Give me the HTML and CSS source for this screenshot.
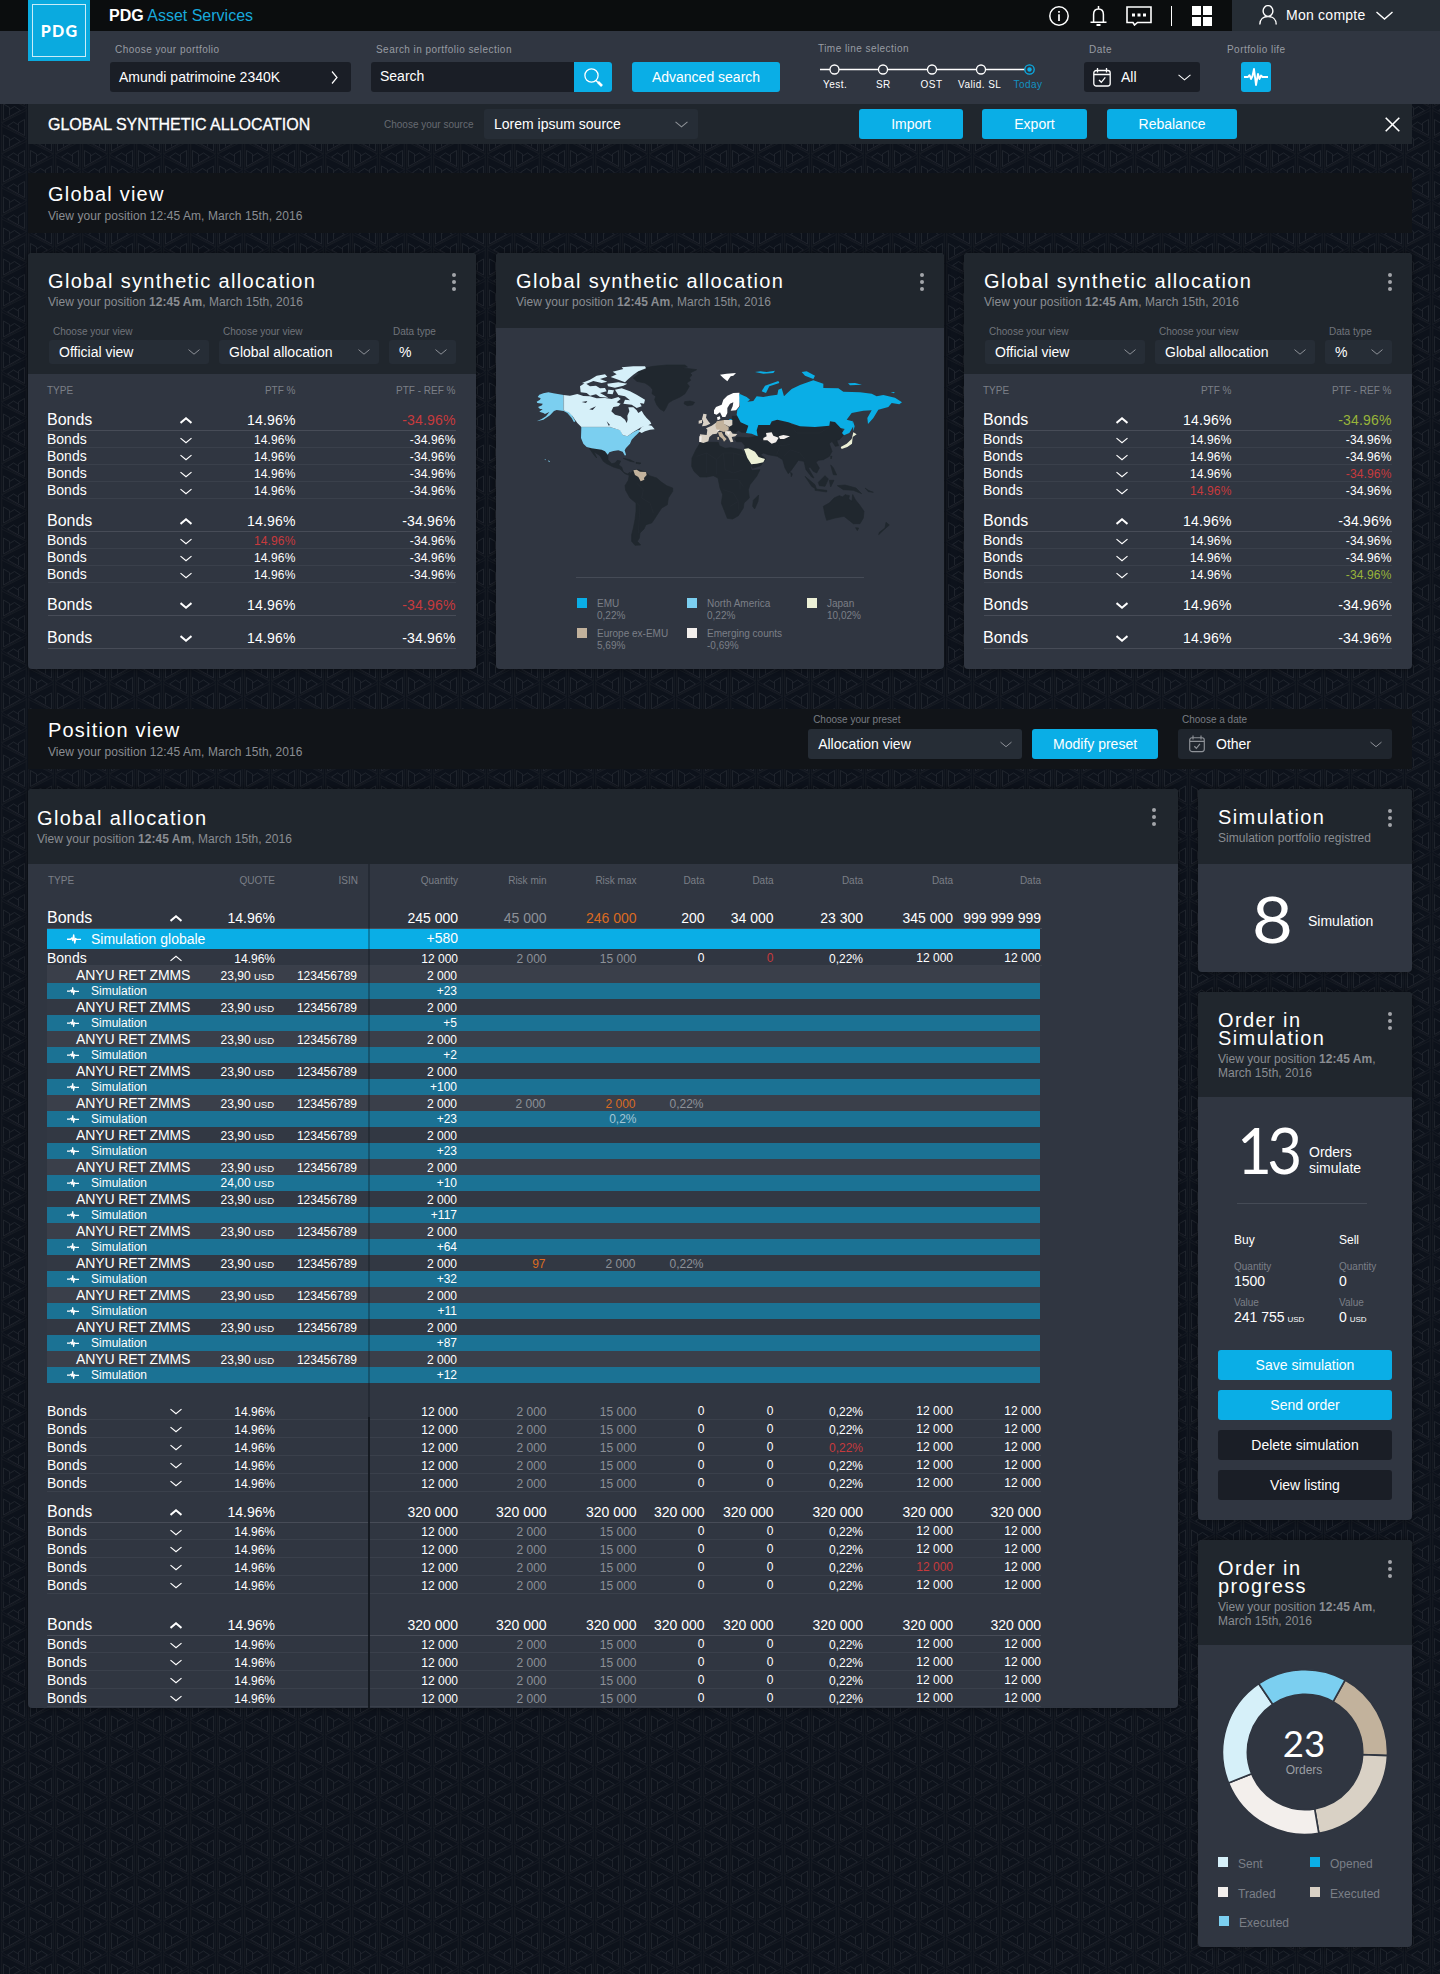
FILE: index.html
```html
<!DOCTYPE html>
<html lang="en">
<head>
<meta charset="utf-8">
<title>PDG Asset Services</title>
<link rel="stylesheet" href="styles.css">
</head>
<body>
<svg class="sprite" width="0" height="0" aria-hidden="true">
  <symbol id="chev" viewBox="0 0 12 6"><path d="M.5.6 6 5.2 11.500 .6" fill="none" stroke="currentColor"/></symbol>
  <symbol id="chev-up" viewBox="0 0 12 6"><path d="M.5 5.400 6 .8l5.500 4.600" fill="none" stroke="currentColor"/></symbol>
  <symbol id="kebab" viewBox="0 0 4 18"><g fill="currentColor"><circle cx="2" cy="2" r="2"/><circle cx="2" cy="9" r="2"/><circle cx="2" cy="16" r="2"/></g></symbol>
  <symbol id="pulse" viewBox="0 0 24 18"><path d="M0 9h4l1.500-1.800L7 11l1.500-3L10 1l2 16 2-11 1.500 5L17 7.500 18.500 9H24" fill="none" stroke="currentColor" stroke-width="1.900" stroke-linejoin="round"/></symbol>
  <symbol id="beat" viewBox="0 0 14 10"><path d="M0 5.200h3.500L4.800 4 5.700 6.500 6.700 1 7.700 9l1-4.500 1 .9H14" fill="none" stroke="currentColor" stroke-width="1.400" stroke-linejoin="round"/></symbol>
  <symbol id="cal" viewBox="0 0 18 19"><g fill="none" stroke="currentColor" stroke-width="1.300"><rect x=".8" y="2.500" width="16.400" height="15.500" rx="2.500"/><path d="M1 6.500h16M4.500 0v4.500M13.500 0v4.500M6 12l2.300 2.300 4-5"/></g></symbol>
</svg>

<header>
  <div class="topbar">
    <div class="brand"><b>PDG</b> Asset Services</div>
    <nav class="tools">
      <svg class="t-info" width="20" height="20" viewBox="0 0 20 20"><circle cx="10" cy="10" r="9.200" fill="none" stroke="#fff" stroke-width="1.500"/><path d="M10 8.200V15M10 5v1.800" stroke="#fff" stroke-width="1.700"/></svg>
      <svg class="t-bell" width="17" height="20" viewBox="0 0 17 20"><path d="M8.500 0v3M.5 16.200h16M3.600 16V8.500C3.600 5 5.500 3 8.500 3s4.900 2 4.900 5.500V16" fill="none" stroke="#fff" stroke-width="1.500"/><path d="M6.500 18h4v2h-4z" fill="#fff"/></svg>
      <svg class="t-chat" width="26" height="20" viewBox="0 0 26 20"><path d="M1 1h24v15.500H11.500L8.500 19l-1.500-2.500H1z" fill="none" stroke="#fff" stroke-width="1.600"/><path d="M6 7.500h3v3H6zM11.500 7.500h3v3h-3zM17 7.500h3v3h-3z" fill="#fff"/></svg>
      <i class="sep"></i>
      <svg class="t-grid" width="20" height="20" viewBox="0 0 20 20"><path d="M0 0h9v9H0zM11 0h9v9h-9zM0 11h9v9H0zM11 11h9v9h-9z" fill="#fff"/></svg>
    </nav>
    <div class="account">
      <svg width="18" height="20" viewBox="0 0 18 20"><path d="M.8 19.500C.8 14 4.500 11.500 9 11.500s8.200 2.500 8.200 8" fill="none" stroke="#fff" stroke-width="1.400"/><ellipse cx="9" cy="6" rx="4.900" ry="5.400" fill="#262d35" stroke="#fff" stroke-width="1.400"/></svg>
      <span>Mon compte</span>
      <svg width="17" height="9" viewBox="0 0 17 9"><path d="M.5 1l8 7 8-7" fill="none" stroke="#fff" stroke-width="1.400"/></svg>
    </div>
    <div class="logo"><span>PDG</span></div>
  </div>
  <div class="filters">
    <div class="field f-portfolio"><label>Choose your portfolio</label>
      <div class="box">Amundi patrimoine 2340K<svg width="7" height="13" viewBox="0 0 7 13"><path d="M1 .5l5 6-5 6" fill="none" stroke="#fff" stroke-width="1.200"/></svg></div></div>
    <div class="field f-search"><label>Search in portfolio selection</label>
      <div class="search"><span>Search</span><button><svg width="19" height="19" viewBox="0 0 19 19"><circle cx="7.500" cy="7.500" r="6.600" fill="none" stroke="#fff" stroke-width="1.300"/><path d="M12 12.500l2 2" stroke="#fff" stroke-width="1.400"/><path d="M14 14l4 4" stroke="#fff" stroke-width="2.600"/></svg></button></div></div>
    <button class="btn advanced">Advanced search</button>
    <div class="field f-time"><label>Time line selection</label>
      <svg width="216" height="12" viewBox="0 0 216 12"><path d="M0 6.500h206" stroke="#fff" stroke-width="1.300"/><g fill="#303641" stroke="#fff" stroke-width="1.300"><circle cx="14.500" cy="6.500" r="4.500"/><circle cx="63" cy="6.500" r="4.500"/><circle cx="112" cy="6.500" r="4.500"/><circle cx="161" cy="6.500" r="4.500"/><circle cx="209.500" cy="6.500" r="4.700" stroke="#0aaee6"/></g><circle cx="209.500" cy="6.500" r="2.200" fill="#0aaee6"/></svg>
      <div class="stops"><span>Yest.</span><span>SR</span><span>OST</span><span>Valid. SL</span><span class="on">Today</span></div></div>
    <div class="field f-date"><label>Date</label>
      <div class="box"><svg width="18" height="19"><use href="#cal"/></svg><span>All</span><svg class="c" width="13" height="7"><use href="#chev"/></svg></div></div>
    <div class="field f-life"><label>Portfolio life</label>
      <button class="life"><svg width="24" height="18"><use href="#pulse"/></svg></button></div>
  </div>
</header>

<main>
  <div class="titlebar">
    <h1>GLOBAL SYNTHETIC ALLOCATION</h1>
    <label>Choose your source</label>
    <div class="select s-source">Lorem ipsum source<svg width="13" height="7"><use href="#chev"/></svg></div>
    <button class="btn b-import">Import</button>
    <button class="btn b-export">Export</button>
    <button class="btn b-rebalance">Rebalance</button>
    <svg class="close" width="15" height="15" viewBox="0 0 15 15"><path d="M.7.7l13.600 13.600M14.300 .7L.7 14.300" stroke="#fff" stroke-width="1.600"/></svg>
  </div>

  <section class="section s-global">
    <div><h2>Global view</h2><p>View your position 12:45 Am, March 15th, 2016</p></div>
  </section>

  <div class="cards">
    <article class="card">
      <div class="head tall">
        <svg class="kebab" width="4" height="18"><use href="#kebab"/></svg>
        <h2>Global synthetic allocation</h2><p>View your position <b>12:45 Am</b>, March 15th, 2016</p>
        <div class="selects">
          <div><label>Choose your view</label><div class="select">Official view<svg width="12" height="6"><use href="#chev"/></svg></div></div>
          <div><label>Choose your view</label><div class="select">Global allocation<svg width="12" height="6"><use href="#chev"/></svg></div></div>
          <div><label>Data type</label><div class="select">%<svg width="12" height="6"><use href="#chev"/></svg></div></div>
        </div>
      </div>
      <div class="alloc" data-table="left"></div>
    </article>

    <article class="card">
      <div class="head mid">
        <svg class="kebab" width="4" height="18"><use href="#kebab"/></svg>
        <h2>Global synthetic allocation</h2><p>View your position <b>12:45 Am</b>, March 15th, 2016</p>
      </div>
      <svg class="map" width="368" height="185" viewBox="138 370 1104 555">
        <g fill="#20272e" stroke="#20272e" stroke-width="2" stroke-linejoin="round">
          <path d="M430 415 450 400 436 398 470 390 462 385 490 380 530 376 585 376 592 382 575 384 620 390 600 400 606 406 598 415 602 422 590 430 598 440 585 462 570 472 548 482 535 490 528 505 522 515 510 508 500 495 494 480 497 470 486 462 488 450 480 440 465 430 440 425Z"/>
          <path d="M584 486 600 484 614 488 608 496 592 498 582 492Z"/>
          <path d="M298 626 320 628 335 630 345 636 354 648 354 660 365 672 375 670 382 662 392 664 386 676 395 682 400 697 412 703 420 698 418 707 405 702 390 688 370 682 350 672 340 665 330 648 312 636 320 655 312 646Z"/>
          <path d="M430 692 445 690 468 698 478 708 500 715 515 728 530 738 548 745 548 755 535 775 532 795 515 805 505 820 492 840 485 850 468 855 462 868 450 880 448 895 442 905 452 916 435 917 425 905 425 885 430 865 435 840 438 815 438 790 420 775 407 752 405 738 415 722 418 705Z"/>
          <path d="M400 656 420 660 433 667 420 665ZM438 668 453 670 450 673 438 671Z"/>
          <path d="M727 530 742 530 750 547 775 557 768 578 755 578 745 572 735 580 722 572 718 562 727 556Z"/>
          <path d="M740 592 775 594 800 590 798 570 802 555 840 553 860 540 895 545 905 555 930 560 975 560 1000 556 1020 545 1040 550 1055 570 1062 585 1048 600 1040 602 1046 618 1036 620 1026 605 1018 612 1026 635 1018 650 1000 660 985 662 978 668 988 685 980 700 970 695 960 682 955 685 972 715 965 712 948 690 942 665 925 662 905 690 895 702 885 685 878 660 862 650 835 645 820 640 812 645 828 658 812 678 788 686 780 672 762 635 765 618 755 606 740 606 734 598Z"/>
          <path d="M630 610 655 608 685 608 688 618 705 626 722 624 755 630 765 645 778 670 785 692 810 690 800 710 780 735 775 750 778 775 762 790 760 805 745 828 728 838 712 836 702 810 694 790 698 765 690 745 684 715 670 708 650 712 630 712 612 695 605 680 606 655 618 630Z"/>
          <path d="M790 782 806 766 804 785 794 808 788 800ZM902 698l5 5-3 8Z"/>
          <path d="M1000 800 1018 790 1032 775 1048 768 1058 772 1065 765 1078 768 1076 778 1086 785 1088 765 1096 780 1108 795 1122 815 1120 835 1110 852 1090 852 1075 840 1062 830 1035 835 1010 842 1005 825ZM1097 864 1106 865 1102 873ZM1188 848 1198 856 1180 872 1166 885 1168 878 1185 865Z"/>
          <path d="M945 710 975 735 980 750 965 740ZM975 748 1010 752 1010 757 975 752ZM985 728 1005 708 1015 718 1005 740 988 738ZM1018 722 1032 722 1022 742ZM1042 738 1065 736 1098 745 1115 762 1090 752 1060 750ZM1022 676 1030 684 1040 706 1030 705ZM1022 650 1026 650 1023 658ZM1125 745 1135 752 1150 758 1135 756Z"/>
        </g>
        <path fill="none" stroke="#2b323b" stroke-width="1" d="M620 650 650 640 680 660 700 640 730 640V680M650 640V700M680 660V705M700 640 705 690 730 700 760 690M700 720H745L760 740M700 750 730 760 745 785 720 800M745 785V810M730 640 765 650M750 720V750M440 730 460 750 455 775 480 790 490 820M440 790 450 800 445 880M880 650 900 630 930 640 945 660M905 560 920 580 990 580 1020 560M810 600 850 620 900 615M860 645 870 620"/>
        <path fill="#7bcff0" d="M221 466 190 461 175 458 160 461 148 465 143 472 152 476 150 480 140 486 142 490 158 492 156 497 144 502 150 508 158 508 148 516 160 520 165 523 178 517 168 530 155 538 140 545 160 540 180 527 192 514 200 511 221 514 232 520 245 535 252 548 256 545 245 525 232 514 221 512Z"/>
        <path fill="#7bcff0" d="M274 562H360L372 566 392 572 398 586 412 590 430 578 445 570 450 575 443 582 435 590 425 600 420 612 408 625 404 632 408 645 405 648 398 636 385 632 370 634 358 638 353 645 345 635 335 630 320 628 305 626 290 622 280 612 273 595ZM163 657 168 660 166 662ZM174 662 180 665 177 668Z"/>
        <g fill="#d6f0f9">
          <path d="M221 466 240 468 262 463 280 469 300 470 320 476 345 475 365 478 385 472 392 478 380 488 392 492 385 500 370 502 364 515 375 525 392 530 405 540 410 550 413 540 412 528 418 515 415 503 430 503 440 512 445 520 455 513 462 525 470 535 480 545 484 552 468 560 455 562 445 568 430 577 412 590 398 586 390 572 372 566 360 562 274 562 262 550 255 540 248 530 236 518 221 512Z"/>
          <path d="M455 562 470 555 485 558 494 569 480 570 465 575 455 580 446 575Z"/>
          <path d="M270 440 285 430 300 440 318 438 330 446 345 445 350 455 330 460 345 468 355 474 330 472 318 464 300 468 290 460 272 458ZM276 430 300 420 320 408 345 404 352 411 330 418 352 426 335 430 310 424 290 432ZM352 432 385 428 412 432 400 438 375 444 354 440ZM355 450 372 452 368 464 352 462Z"/>
          <path d="M375 450 395 446 420 455 440 465 465 480 462 492 450 490 455 500 440 505 425 495 400 492 405 480 420 482 405 470 385 466Z"/>
          <path d="M368 396 400 388 395 383 430 380 465 380 468 386 445 395 430 405 415 418 405 428 385 420 362 412 380 404Z"/>
        </g>
        <path fill="#303641" d="M275 487 292 484 288 490ZM298 509 318 500 308 511ZM350 545 360 556 356 558Z"/>
        <path fill="none" stroke="#8fa9b5" stroke-width="1.500" d="M221 466V513M274 562H362"/>
        <path fill="#c2b29c" d="M430 692 440 690 450 696 468 697 470 706 462 715 463 720 452 725 445 712 435 706Z"/>
        <path fill="#fff" d="M690 405 710 402 738 400 730 408 722 410 712 425 700 415ZM672 512 678 502 695 495 700 480 712 468 730 460 748 459 750 475 748 500 738 512 722 513 728 500 730 488 720 492 712 505 712 520 706 532 697 532 690 518 680 525 672 522ZM681 533 690 530 691 538 683 542Z"/>
        <g fill="#d9d1c5">
          <path d="M640 522 650 524 648 534 655 545 661 552 648 558 636 560 640 548 636 538ZM626 543 636 540 636 550 626 552ZM630 584 650 586 652 570 648 566 665 558 680 548 690 568 680 582 668 584 658 592 655 605 640 610 628 606Z"/>
          <path d="M702 541 727 541 727 556 718 561 702 553ZM705 572 722 574 728 582 742 583 736 590 725 592 730 606 722 608 714 592 705 584Z"/>
        </g>
        <path fill="#c2b29c" d="M680 545 702 541 702 552 716 562 716 570 702 577 680 570 676 558ZM684 578 695 577 702 590 710 598 702 606 698 598 688 590ZM682 592h5v8h-5Z"/>
        <path fill="#f3efec" d="M628 590h7l-1 17h-6ZM678 570 690 570 686 575ZM708 576 720 578 716 586ZM820 595 830 590 828 580 845 578 850 588 866 594 858 608 845 612 832 602 820 602ZM866 590 880 586 900 590 882 598 870 598Z"/>
        <path fill="#0aaee6" d="M748 462 770 472 780 480 772 486 790 484 800 470 820 472 840 468 862 465 865 450 875 446 882 470 892 460 905 448 930 436 970 422 1000 432 1000 445 1045 446 1060 456 1110 458 1145 462 1160 470 1180 466 1215 474 1236 488 1228 494 1205 490 1195 502 1165 510 1150 535 1134 553 1132 535 1145 512 1120 513 1085 520 1070 540 1088 545 1090 560 1078 580 1062 587 1056 580 1064 568 1052 565 1035 547 1020 545 1018 558 975 562 930 560 895 548 862 540 845 545 840 556 805 556 800 572 803 590 785 582 768 580 775 558 752 548 740 525 742 510 750 500 748 480Z"/>
        <path fill="#0aaee6" d="M815 455 825 438 865 424 868 430 838 440 828 460ZM935 397 950 395 975 408 970 418 945 408ZM795 397 812 395 830 397 855 393 850 400 820 402ZM1074 431 1095 430 1116 435 1080 437ZM1088 542 1094 560 1090 575ZM1202 458 1214 457 1212 461ZM718 538h7v3h-7Z"/>
        <path fill="#ecf0d6" d="M762 628 775 626 795 636 806 652 825 658 820 668 800 672 784 674 772 655ZM1085 598 1090 578 1100 584 1088 592 1086 612 1072 622 1055 628 1052 622 1070 612Z"/>
      </svg>
      <div class="map-legend">
        <div><i class="c-emu"></i><span>EMU<br>0,22%</span></div>
        <div><i class="c-na"></i><span>North America<br>0,22%</span></div>
        <div><i class="c-jp"></i><span>Japan<br>10,02%</span></div>
        <div><i class="c-eu"></i><span>Europe ex-EMU<br>5,69%</span></div>
        <div><i class="c-em"></i><span>Emerging counts<br>-0,69%</span></div>
      </div>
    </article>

    <article class="card">
      <div class="head tall">
        <svg class="kebab" width="4" height="18"><use href="#kebab"/></svg>
        <h2>Global synthetic allocation</h2><p>View your position <b>12:45 Am</b>, March 15th, 2016</p>
        <div class="selects">
          <div><label>Choose your view</label><div class="select">Official view<svg width="12" height="6"><use href="#chev"/></svg></div></div>
          <div><label>Choose your view</label><div class="select">Global allocation<svg width="12" height="6"><use href="#chev"/></svg></div></div>
          <div><label>Data type</label><div class="select">%<svg width="12" height="6"><use href="#chev"/></svg></div></div>
        </div>
      </div>
      <div class="alloc" data-table="right"></div>
    </article>
  </div>

  <section class="section s-position">
    <div class="s-text"><h2>Position view</h2><p>View your position 12:45 Am, March 15th, 2016</p></div>
    <div class="preset"><label>Choose your preset</label><div class="select">Allocation view<svg width="12" height="7"><use href="#chev"/></svg></div></div>
    <button class="btn modify">Modify preset</button>
    <div class="other"><label>Choose a date</label><div class="select"><svg width="16" height="18"><use href="#cal"/></svg><span>Other</span><svg class="c" width="12" height="7"><use href="#chev"/></svg></div></div>
  </section>

  <div class="columns">
    <article class="card position">
      <div class="head pos-head">
        <svg class="kebab" width="4" height="18"><use href="#kebab"/></svg>
        <h2>Global allocation</h2><p>View your position <b>12:45 Am</b>, March 15th, 2016</p>
      </div>
      <div class="grid" id="positions"></div>
      <i class="rule-top"></i><i class="rule-bottom"></i>
    </article>

    <aside>
      <article class="card">
        <div class="head side">
          <svg class="kebab" width="4" height="18"><use href="#kebab"/></svg>
          <h2>Simulation</h2><p>Simulation portfolio registred</p>
        </div>
        <div class="count one"><strong>8</strong><span>Simulation</span></div>
      </article>

      <article class="card">
        <div class="head side two">
          <svg class="kebab" width="4" height="18"><use href="#kebab"/></svg>
          <h2>Order in<br>Simulation</h2><p>View your position <b>12:45 Am</b>,<br>March 15th, 2016</p>
        </div>
        <div class="count thirteen"><strong>13</strong><span>Orders<br>simulate</span></div>
        <div class="trade">
          <dl><dt class="side-name">Buy</dt><dt>Quantity</dt><dd>1500</dd><dt>Value</dt><dd>241 755 <small>USD</small></dd></dl>
          <dl><dt class="side-name">Sell</dt><dt>Quantity</dt><dd>0</dd><dt>Value</dt><dd>0 <small>USD</small></dd></dl>
        </div>
        <div class="actions">
          <button class="btn">Save simulation</button>
          <button class="btn">Send order</button>
          <button class="btn dark">Delete simulation</button>
          <button class="btn dark">View listing</button>
        </div>
      </article>

      <article class="card">
        <div class="head side two">
          <svg class="kebab" width="4" height="18"><use href="#kebab"/></svg>
          <h2>Order in<br>progress</h2><p>View your position <b>12:45 Am</b>,<br>March 15th, 2016</p>
        </div>
        <svg class="donut" width="168" height="168" viewBox="-252 -252 504 504">
          <g stroke="#303641" stroke-width="5">
            <path fill="#c2b29c" d="M120.500-216A247.500 247.500 0 0 1 247.300 11L173 8A173 173 0 0 0 84.500-151Z"/>
            <path fill="#d9d1c5" d="M247.300 11A247.500 247.500 0 0 1 41.500 244L29 170.500A173 173 0 0 0 173 8Z"/>
            <path fill="#f3efec" d="M41.500 244A247.500 247.500 0 0 1-229.300 93L-160 65A173 173 0 0 0 29 170.500Z"/>
            <path fill="#d6f0f9" d="M-229.300 93A247.500 247.500 0 0 1-138.500-205L-97-143A173 173 0 0 0-160 65Z"/>
            <path fill="#7bcff0" d="M-138.500-205A247.500 247.500 0 0 1 120.500-216L84.500-151A173 173 0 0 0-97-143Z"/>
          </g>
          <text class="d-num" x="-3" y="16" text-anchor="middle">23</text>
          <text class="d-lab" x="-3" y="66" text-anchor="middle">Orders</text>
        </svg>
        <div class="order-legend">
          <div><i class="c-sent"></i>Sent</div><div><i class="c-emu"></i>Opened</div>
          <div><i class="c-em"></i>Traded</div><div><i class="c-ex"></i>Executed</div>
          <div><i class="c-na"></i>Executed</div>
        </div>
      </article>
    </aside>
  </div>
</main>
<script src="script.js"></script>
</body>
</html>
```
FILE: styles.css
```css
* { box-sizing: border-box; margin: 0; padding: 0; }
body {
  width: 1440px;
  min-height: 1974px;
  font: 14px/17px "Liberation Sans", Arial, sans-serif;
  color: #fff;
  background: #0d121b url("data:image/svg+xml,%3Csvg xmlns='http://www.w3.org/2000/svg' xmlns:xlink='http://www.w3.org/1999/xlink' width='54' height='31'%3E%3Cdefs%3E%3Cg id='h' fill='none' stroke='%2321262e' stroke-width='.9'%3E%3Cpath d='M9 7.500V-.5L3-4V12L20 2.500 14-1.500 9 1.500'/%3E%3Cpath stroke='%23161b23' d='M1.200-15V15L26-.5 1.200-13'/%3E%3C/g%3E%3Cg id='p'%3E%3Cuse xlink:href='%23h'/%3E%3Cuse xlink:href='%23h' transform='scale(-1 1)'/%3E%3C/g%3E%3C/defs%3E%3Cuse xlink:href='%23p' x='27.500' y='15.500'/%3E%3Cuse xlink:href='%23p' x='.5' y='0'/%3E%3Cuse xlink:href='%23p' x='54.500' y='0'/%3E%3Cuse xlink:href='%23p' x='.5' y='31'/%3E%3Cuse xlink:href='%23p' x='54.500' y='31'/%3E%3C/svg%3E") 0 15px;
}
button { border: 0; font: inherit; color: inherit; }
svg { display: block; flex: none; }
.sprite { position: absolute; }
h1, h2 { font-weight: 400; }
h2 { font-size: 20px; line-height: 20px; letter-spacing: 1.33px; }
p { font-size: 12px; line-height: 14px; letter-spacing: .03px; color: #8a8d92; }
label { display: block; font-size: 10px; line-height: 12px; color: #787c83; white-space: nowrap; }
.btn { height: 30px; line-height: 30px; border-radius: 3px; background: #0aaee6; text-align: center; white-space: nowrap; }
.btn.dark { background: #1a1e26; }

/* header */
.topbar { position: relative; display: flex; height: 31px; background: #0b0d0e; }
.brand { width: 950px; padding: 6px 0 0 109px; font-size: 16px; line-height: 19px; color: #18a9dc; }
.brand b { color: #fff; }
.tools { display: flex; width: 282px; padding: 6px 0 0 99px; }
.t-bell { margin-left: 21px; }
.t-chat { margin-left: 19px; }
.sep { width: 1px; height: 20px; margin: 0 20px 0 19px; background: #fff; }
.account { display: flex; align-items: flex-start; flex: 1; padding: 5px 0 0 27px; background: #262d35; line-height: 20px; }
.account span { margin: 0 10px 0 9px; letter-spacing: .25px; white-space: nowrap; }
.account svg:last-child { margin-top: 6px; }
.logo { position: absolute; left: 28px; top: 0; width: 62px; height: 61px; padding: 4px; background: #0aaadf; z-index: 1; }
.logo span { display: block; height: 53px; border: 1px solid #c9ecf8; font: 900 16px/52px Lato, sans-serif; letter-spacing: 1.3px; text-align: center; padding-left: 1px; }
.filters { display: flex; height: 73px; padding: 13px 0 0 110px; background: #303641; }
.field label { margin: 0 0 6px 5px; letter-spacing: .45px; color: #989ca3; }
.box { display: flex; align-items: center; height: 30px; padding: 0 9px; border-radius: 3px; background: #1a1e26; }
.f-portfolio { width: 241px; margin-right: 20px; }
.f-portfolio .box { justify-content: space-between; padding-right: 13px; }
.f-search { width: 241px; margin-right: 20px; }
.search { display: flex; height: 30px; border-radius: 3px; background: #1a1e26; overflow: hidden; }
.search span { flex: 1; padding-left: 9px; line-height: 29px; }
.search button { display: flex; align-items: center; justify-content: center; width: 38px; background: #0aaee6; }
.advanced { width: 148px; margin: 18px 38px 0 0; }
.f-time { width: 232px; margin-left: 2px; }
.field.f-time label { margin: -1px 0 8px -2px; }
.stops { display: flex; margin: 4px 0 0 -9px; font-size: 10px; line-height: 12px; letter-spacing: .45px; }
.stops span { width: 48.7px; text-align: center; white-space: nowrap; }
.stops .on { color: #1292c2; }
.f-date { width: 116px; margin: 0 26px 0 32px; }
.f-date .box span { margin-left: 10px; }
.f-date .c { margin-left: auto; }
.field.f-life label { margin-left: 1px; }
.life { display: flex; align-items: center; justify-content: center; width: 30px; height: 30px; margin-left: 15px; border-radius: 3px; background: #0aaee6; }

main { padding: 0 28px; }
.select { display: flex; align-items: center; justify-content: space-between; height: 30px; padding: 0 10px; border-radius: 3px; background: #262d36; white-space: nowrap; }
.select svg { color: #8e9298; }
.titlebar { display: flex; align-items: center; height: 40px; background: #20262d; }
.titlebar h1 { flex: none; width: 336px; padding-left: 20px; font-size: 16px; white-space: nowrap; -webkit-text-stroke: .3px #fff; }
.titlebar label { flex: none; width: 120px; padding: 1px 0 0 20px; color: #666a71; }
.s-source { width: 214px; }
.titlebar .btn { margin-right: 20px; }
.titlebar .b-import { width: 104px; margin: 0 19px 0 161px; }
.b-export { width: 105px; }
.b-rebalance { width: 130px; }
.close { margin-left: 128px; }

.section { display: flex; height: 60px; background: #111418; }
.section h2 { letter-spacing: 1.2px; }
.section p { letter-spacing: .07px; }
.s-global { margin-top: 29px; padding: 11px 20px; }
.s-global p { margin-top: 5px; }

/* cards */
.cards { display: flex; gap: 20px; margin-top: 20px; }
.cards .card { width: 448px; height: 416px; }
.card { border-radius: 4px; background: #303641; box-shadow: 0 0 6px rgba(0, 0, 0, .45); overflow: hidden; }
.head { background: #20262d; padding: 18px 20px 0; }
.head p { margin-top: 4px; white-space: nowrap; }
.kebab { float: right; color: #a2a5a9; }
.head .kebab { margin-top: 2px; }
.tall { height: 121px; }
.mid { height: 75px; }
.selects { display: flex; gap: 10px; margin: 17px 0 0 1px; }
.selects > div { width: 160px; }
.selects > div:last-child { width: 67px; }
.selects label { margin: 0 0 2px 4px; color: #70747b; }
.selects .select { height: 24px; padding-right: 9px; }

.alloc { padding: 0 20px; }
.row { display: grid; align-items: baseline; border-bottom: 1px solid #3a404b; font-size: 12px; white-space: pre; }
.row > :first-child { font-size: 14px; }
.row svg { align-self: center; }
.row.lead { border-color: #474c57; font-size: 14px; }
.row.lead > :first-child { font-size: 16px; }
.row.lead svg { stroke-width: 2px; }
.thin { stroke-width: 1.2px; }
.row.labels { border: 0; color: #7b7f87; font-size: 10px; line-height: 12px; }
.row.labels > :first-child { font-size: 10px; }
.n { text-align: right; }
.alloc .row { grid-template-columns: 132px 12px 103.500px 160px; height: 17px; line-height: 17px; letter-spacing: .15px; }
.alloc .row > :first-child { margin-left: -1px; letter-spacing: 0; }
.alloc .lead { height: 33px; padding-top: 13px; }
.alloc .labels { height: 24px; padding-top: 11px; line-height: 12px; letter-spacing: 0; }
.red { color: #c73a3d; }
.green { color: #98b43a; }
.orange { color: #db6b22; }
.dim { color: #8d9198; }

.map { margin: 35px 0 0 40px; }
.map-legend { display: grid; grid-template-columns: 110px 120px 80px; row-gap: 6px; margin: 29px 80px 0; padding: 20px 0 0 1px; border-top: 1px solid #454b56; font-size: 10px; line-height: 12px; color: #7b7f87; white-space: nowrap; }
.map-legend div { display: flex; gap: 10px; }
.map-legend i, .order-legend i { flex: none; width: 10px; height: 10px; }
.c-emu { background: #0aaee6; }
.c-na { background: #7bcff0; }
.c-jp { background: #ecf0d6; }
.c-eu { background: #c2b29c; }
.c-em { background: #f3efec; }
.c-sent { background: #d6f0f9; }
.c-ex { background: #d9d1c5; }

.s-position { margin-top: 40px; padding: 0 20px; }
.s-text { width: 761px; padding-top: 11px; }
.s-text p { margin-top: 5px; }
.s-position label { margin: 5px 0 3px 5px; color: #787c83; }
.preset .select { width: 214px; }
.modify { width: 126px; margin: 20px 20px 0 10px; }
.s-position .other label { margin-left: 4px; }
.other .select { width: 214px; padding-left: 11px; background: #1f252d; }
.other span { margin: 0 auto 0 11px; }

.columns { display: flex; align-items: flex-start; gap: 20px; margin-top: 20px; }
.position { position: relative; width: 1150px; height: 919px; }
.pos-head { height: 75px; padding: 19px 22px 0 9px; }
.head.pos-head .kebab { margin-top: 0; }
.pos-head p { margin-top: 4px; }
.grid { padding-left: 19px; }
.grid .row { grid-template-columns: 123px 12px 93px 83px 100px 88.500px 90px 68px 69px 89.500px 90px 88px; width: 994px; height: 18px; line-height: 18px; }
.grid .labels { height: 36px; padding-top: 11px; line-height: 12px; }
.grid .labels > :first-child { padding-left: 1px; }
.grid .lead, .grid .tight { line-height: 17px; }
.grid .lift { position: relative; top: -1px; }
.grid .wide { width: 995px; }
.grid .asset, .grid .sim { width: 993px; height: 16px; line-height: 16px; border: 0; }
.grid .asset { background: #323843; }
.grid .asset.odd { background: #3a3f4a; }
.grid .asset > :first-child { padding-left: 29px; letter-spacing: -.1px; }
.grid .asset .n { position: relative; left: -1px; }
.grid .sim { background: #1b7294; }
.grid .sim > :first-child { display: flex; align-items: center; gap: 12px; padding-left: 20px; font-size: 12px; }
.grid .sim .n { position: relative; left: -1px; top: -1px; }
.grid .sim.all { height: 20px; line-height: 20px; background: #0aaee6; font-size: 14px; }
.grid .sim.all > :first-child { gap: 10px; font-size: 14px; }
.grid .sim.all .n { left: 0; }
.grid .sim .dim { left: 0; color: #a4c6d4; }
.grid small { font-size: 9.500px; }
.rule-top, .rule-bottom { position: absolute; left: 340px; width: 2px; top: 75px; height: 553px; background: rgba(10, 16, 22, .3); }
.rule-bottom { top: 628px; height: 291px; background: #10151c; opacity: .85; }

aside { display: flex; flex-direction: column; gap: 20px; width: 214px; }
.side { height: 75px; }
.side h2 { line-height: 18px; margin-top: 1px; letter-spacing: 1.4px; }
.side p { margin-top: 5px; }
.head.side .kebab { margin-top: 2px; }
.side.two { height: 105px; }
.count { display: flex; }
.count strong { font: 400 64px/64px Lato, sans-serif; }
.one { height: 108px; padding: 23px 0 0 54px; }
.one span { margin: 26px 0 0 20px; }
.one strong { width: 36px; transform: scaleX(1.1); transform-origin: 0 0; }
.thirteen { height: 107px; margin: 0 45px 0 39px; padding-top: 21px; border-bottom: 1px solid #454b56; white-space: nowrap; }
.thirteen strong { width: 72px; letter-spacing: -5px; transform: scaleX(.94); transform-origin: 0 0; }
.thirteen span { padding-top: 26px; line-height: 16px; }
.trade { display: flex; height: 146px; padding: 29px 0 0 36px; }
.trade dl { flex: none; width: 105px; }
.trade dt { font-size: 10px; line-height: 12px; color: #7b7f87; }
.trade dt.side-name { font-size: 12px; line-height: 14px; color: #fff; }
.trade dt.side-name + dt { margin-top: 14px; }
.trade dd { line-height: 17px; margin-bottom: 7px; }
.trade small { margin-left: -1px; font-size: 8px; }
.actions { display: grid; gap: 10px; padding: 0 20px 20px; }

.donut { margin: 23px 0 0 23px; }
.d-num { font: 400 110px Lato, sans-serif; fill: #fff; }
.d-lab { font: 36px "Liberation Sans", sans-serif; fill: #9b9ea3; }
.order-legend { display: grid; grid-template-columns: 92px 92px; height: 111px; align-content: start; row-gap: 16px; padding: 21px 20px 0; font-size: 12px; line-height: 14px; color: #7b7f87; }
.order-legend div { display: flex; gap: 10px; }
.order-legend div:last-child { margin: -1px 0 0 1px; }
```
FILE: script.js
```js
const icon = (id, cls) => `<svg class="${cls}" width="12" height="7"><use href="#${id}"/></svg>`;
const pulse = size => `<svg width="${size}" height="10"><use href="#beat"/></svg>`;

/* value prefixes: ! red, ^ green, ~ orange, . dim */
const tones = { '!': 'red', '^': 'green', '~': 'orange', '.': 'dim' };
function cell(v, extra = '') {
  const tone = tones[v[0]];
  return `<span class="n ${tone || ''} ${extra}">${tone ? v.slice(1) : v}</span>`;
}

/* allocation cards: [kind, ptf, ref] */
const P = '14.96%', R = '-34.96%';
const alloc = {
  left: [['up', P, '!' + R], ['', P, R], ['', P, R], ['', P, R], ['', P, R],
    ['up', P, R], ['', '!' + P, R], ['', P, R], ['', P, R], ['down', P, '!' + R], ['down', P, R]],
  right: [['up', P, '^' + R], ['', P, R], ['', P, R], ['', P, '!' + R], ['', '!' + P, R],
    ['up', P, R], ['', P, R], ['', P, R], ['', P, '^' + R], ['down', P, R], ['down', P, R]]
};
document.querySelectorAll('.alloc').forEach(el => {
  el.innerHTML = '<div class="row labels"><span>TYPE</span><span></span><span class="n">PTF %</span><span class="n">PTF - REF %</span></div>' +
    alloc[el.dataset.table].map(([kind, a, b]) =>
      `<div class="row ${kind ? 'lead' : ''}"><span>Bonds</span>${icon(kind === 'up' ? 'chev-up' : 'chev', kind ? '' : 'thin')}${cell(a)}${cell(b)}</div>`).join('');
});

/* position table */
function row(name, values, { cls = '', up = false, height, pad } = {}) {
  const lead = cls.includes('lead');
  const style = height ? ` style="height:${height}px;padding-top:${pad || 0}px"` : '';
  return `<div class="row ${cls}"${style}><span>${name}</span>${icon(up ? 'chev-up' : 'chev', lead ? '' : 'thin')}` +
    values.map((v, i) => cell(v, !lead && (i === 5 || i === 6 || i > 7) ? 'lift' : '')).join('') + '</div>';
}
const small = () => ['14.96%', '', '12 000', '.2 000', '.15 000', '0', '0', '0,22%', '12 000', '12 000'];
const withCell = (i, v) => { const s = small(); s[i] = v; return s; };
const total = ['14.96%', '', ...Array(8).fill('320 000')];
const tight = { cls: 'tight', height: 17 };

let html = '<div class="row labels wide"><span>TYPE</span><span></span>' +
  ['QUOTE', 'ISIN', 'Quantity', 'Risk min', 'Risk max', 'Data', 'Data', 'Data', 'Data', 'Data'].map(v => cell(v)).join('') + '</div>';
html += row('Bonds', ['14.96%', '', '245 000', '.45 000', '~246 000', '200', '34 000', '23 300', '345 000', '999 999 999'],
  { cls: 'lead wide', up: true, height: 29, pad: 9 });
html += `<div class="row sim all"><span>${pulse(14)}Simulation globale</span><span></span><span></span><span></span>${cell('+580')}</div>`;
html += row('Bonds', withCell(6, '!0'), { cls: 'wide', up: true, height: 17 });

const quantities = [23, 5, 2, 100, 23, 23, 10, 117, 64, 32, 11, 87, 12];
quantities.forEach((q, i) => {
  const risk = i === 4 ? ['.2 000', '~2 000', '.0,22%'] : i === 9 ? ['~97', '.2 000', '.0,22%'] : [];
  const first = i === 0 ? ' style="height:17px;padding-top:1px"' : '';
  html += `<div class="row asset ${i % 2 ? '' : 'odd'}"${first}><span>ANYU RET ZMMS</span><span></span>` +
    ['23,90 <small>USD</small>', '123456789', '2 000', ...risk].map(v => cell(v)).join('') + '</div>';
  html += `<div class="row sim"><span>${pulse(12)}Simulation</span><span></span>${cell(i === 6 ? '24,00 <small>USD</small>' : '')}<span></span>${cell('+' + q)}` +
    (i === 4 ? '<span></span>' + cell('.0,2%') : '') + '</div>';
});

html += '<div style="height:19px"></div>';
for (let i = 0; i < 5; i++) html += row('Bonds', i === 2 ? withCell(7, '!0,22%') : small());
html += row('Bonds', total, { cls: 'lead', up: true, height: 31, pad: 11 });
for (let i = 0; i < 4; i++) html += row('Bonds', i === 2 ? withCell(8, '!12 000') : small(), i ? {} : tight);
html += row('Bonds', total, { cls: 'lead', up: true, height: 42, pad: 22 });
for (let i = 0; i < 4; i++) html += row('Bonds', small(), i ? {} : tight);
document.getElementById('positions').innerHTML = html;
```
